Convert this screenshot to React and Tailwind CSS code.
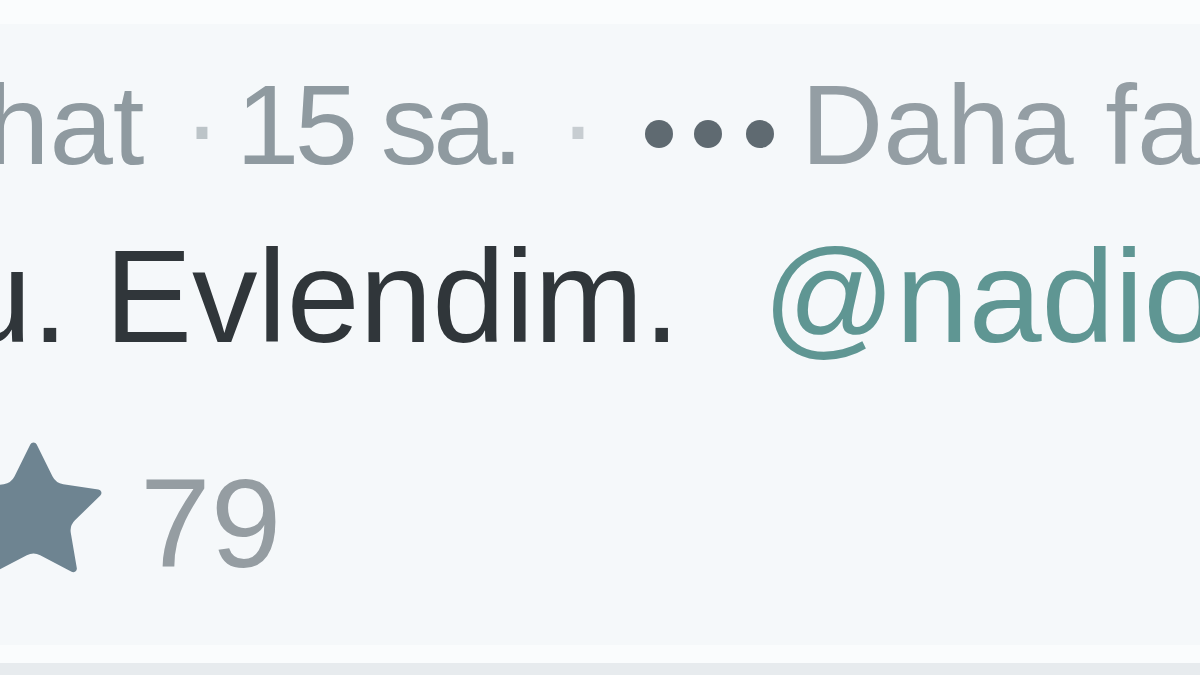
import React from "react";

function Dots() {
  return (
    <svg width="182" height="60" viewBox="0 0 182 60" className="shrink-0 block">
      <circle cx="51" cy="30" r="14" fill="#5f6a71" />
      <circle cx="100" cy="30" r="14" fill="#5f6a71" />
      <circle cx="152" cy="30" r="14" fill="#5f6a71" />
    </svg>
  );
}

function Star() {
  return (
    <svg
      width="163"
      height="163"
      viewBox="0 0 24 24"
      className="shrink-0 block ml-[-48px]"
      fill="#6e8491"
    >
      <path d="M11.525 2.295a.53.53 0 0 1 .95 0l2.31 4.679a2.123 2.123 0 0 0 1.595 1.16l5.166.756a.53.53 0 0 1 .294.904l-3.736 3.638a2.123 2.123 0 0 0-.611 1.878l.882 5.14a.53.53 0 0 1-.771.56l-4.618-2.428a2.122 2.122 0 0 0-1.973 0L6.396 21.01a.53.53 0 0 1-.77-.56l.881-5.139a2.122 2.122 0 0 0-.611-1.879L2.16 9.795a.53.53 0 0 1 .294-.906l5.165-.755a2.122 2.122 0 0 0 1.597-1.16z" />
    </svg>
  );
}

export default function App() {
  return (
    <div className="w-[1200px] h-[675px] overflow-hidden bg-[#f5f8fa] flex flex-col font-['Liberation_Sans',Arial,sans-serif]">
      <div className="h-[24px] shrink-0 bg-[#fafcfd]" />
      {/* meta line */}
      <div className="mt-[44px] h-[114px] shrink-0 flex items-baseline whitespace-nowrap text-[114px] leading-none text-[#8f9aa0]">
        <span className="ml-[-14px] w-[186px] shrink-0">hat</span>
        <span className="w-[60px] shrink-0 text-center text-[#bcc4c8]">·</span>
        <span className="ml-[4px] w-[312px] shrink-0 tracking-[-0.04em]">15 sa.</span>
        <span className="w-[60px] shrink-0 text-center text-[#c7cdd1]">·</span>
        <Dots />
        <span className="ml-[11px] shrink-0 text-[#949ea4]">Daha fazla</span>
      </div>
      {/* tweet text */}
      <div className="mt-[49px] h-[131px] shrink-0 flex items-baseline whitespace-nowrap text-[131px] leading-none">
        <span className="ml-[-41px] shrink-0 text-[#30363a]">u. Evlendim.</span>
        <span className="ml-[83px] shrink-0 text-[#5f9693]">@nadio</span>
      </div>
      {/* actions */}
      <div className="mt-[67px] shrink-0 flex items-start">
        <Star />
        <span className="ml-[25px] mt-[31px] text-[127px] leading-none text-[#959da2]">79</span>
      </div>
      <div className="mt-auto h-[18px] shrink-0 bg-[#fafcfd]" />
      <div className="h-[12px] shrink-0 bg-[#e7ebee]" />
    </div>
  );
}
